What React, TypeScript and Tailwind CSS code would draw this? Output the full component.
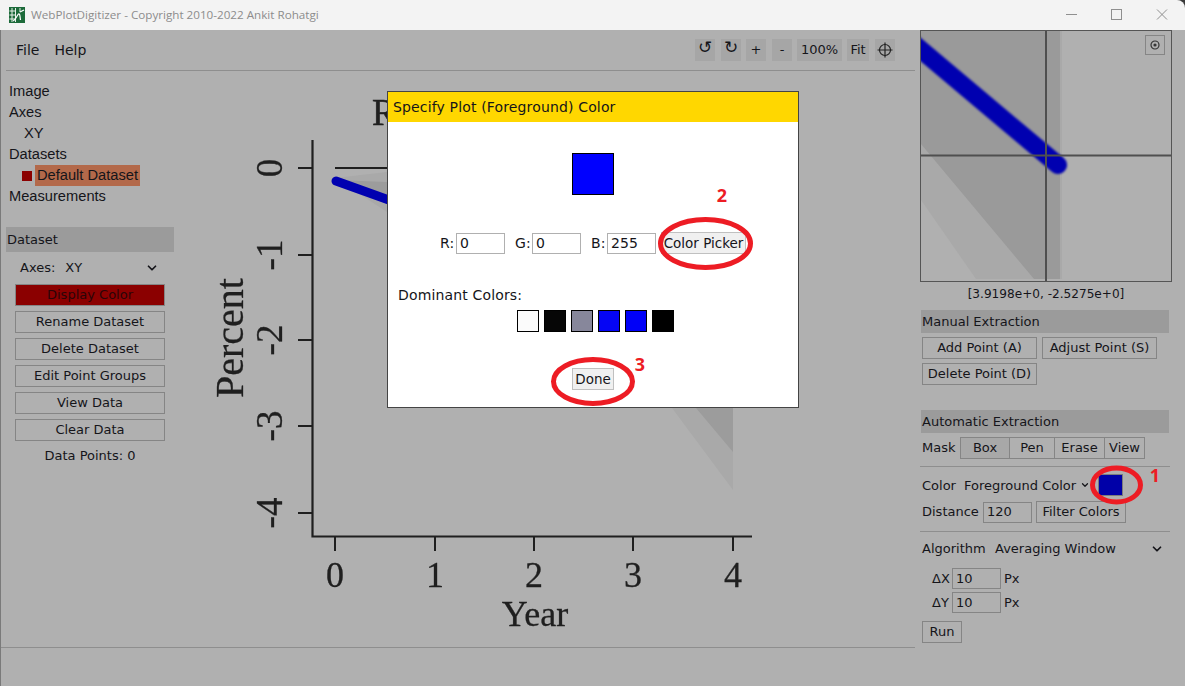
import { ChevronDown } from 'lucide-react';

const ui = "font-['DejaVu_Sans',sans-serif] text-[13px]";

const DATASET_ACTIONS = ['Rename Dataset', 'Delete Dataset', 'Edit Point Groups', 'View Data', 'Clear Data'];
const DOMINANT = ['bg-[#fbfbfb]', 'bg-[#060606]', 'bg-[#87879b]', 'bg-[#0505f5]', 'bg-[#0000f8]', 'bg-black'];

const Btn = ({ label, className = '' }: { label: string; className?: string }) => (
  <div className={`flex h-[22px] items-center justify-center border border-[#858585] text-[#15151a] ${className}`}>{label}</div>
);

const SectionHead = ({ label }: { label: string }) => (
  <div className="flex h-[23px] items-center bg-[#9b9b9b] pl-[1px] text-[#15151a]">{label}</div>
);

const Field = ({ value, className = '' }: { value: string; className?: string }) => (
  <div className={`flex h-[21px] w-[49px] items-center border border-[#858585] pl-[3px] ${className}`}>{value}</div>
);

const ToolBtn = ({ label, className = '' }: { label: React.ReactNode; className?: string }) => (
  <div className={`flex h-[22px] items-center justify-center bg-[#a6a6a6] text-[#15151a] ${className}`}>{label}</div>
);

function AppIcon() {
  return (
    <svg width="16" height="16" viewBox="0 0 16 16" className="shrink-0">
      <rect width="16" height="16" fill="#1c6a3a" />
      <path d="M0.5 4H7M0.5 8H7M0.5 12H7M3 1V15M6.5 1V15M11 1V5" stroke="#e8f0e8" strokeWidth="1" fill="none" />
      <path d="M4 14C7 13 8 8 9.5 7C11 6 11 10 11.5 13M11 5L15 3" stroke="#fff" strokeWidth="1.2" fill="none" />
    </svg>
  );
}

function TitleBar() {
  return (
    <div className="flex h-[30px] shrink-0 items-center rounded-tr-[8px] bg-[#f3f3f3] pl-[9px]">
      <AppIcon />
      <span className="ml-[6px] font-['Open_Sans',sans-serif] text-[11.67px] text-[#8c8c8c]">
        WebPlotDigitizer - Copyright 2010-2022 Ankit Rohatgi
      </span>
      <svg width="119" height="30" viewBox="0 0 119 30" fill="none" stroke="#8f8f8f" strokeWidth="1" className="ml-auto">
        <path d="M0 14.5H11" />
        <rect x="45.5" y="9.5" width="10" height="10" />
        <path d="M91 9.5L101 19.5M101 9.5L91 19.5" />
      </svg>
    </div>
  );
}

function MenuBar() {
  return (
    <div className={`ml-[5px] flex h-[41px] shrink-0 items-center justify-between border-b border-[#8e8e8e] pl-[10px] pr-[20px] ${ui}`}>
      <div className="flex gap-[15px] text-[14px] text-[#15151a]">
        <span>File</span>
        <span>Help</span>
      </div>
      <div className="flex gap-[5px]">
        <ToolBtn label="↺" className="w-[20px] pb-[4px] text-[17px]" />
        <ToolBtn label="↻" className="ml-[1px] w-[20px] pb-[4px] text-[17px]" />
        <ToolBtn label="+" className="w-[20px]" />
        <ToolBtn label="-" className="ml-[1px] w-[20px]" />
        <ToolBtn label="100%" className="w-[45px]" />
        <ToolBtn label="Fit" className="w-[22px]" />
        <ToolBtn
          className="ml-[1px] w-[20px]"
          label={
            <svg width="16" height="16" viewBox="0 0 16 16" fill="none" stroke="#222" strokeWidth="1.2">
              <circle cx="8" cy="8" r="5.5" />
              <path d="M8 0.5V15.5M0.5 8H15.5" />
            </svg>
          }
        />
      </div>
    </div>
  );
}

function LeftPanel() {
  return (
    <div className={`flex w-[179px] shrink-0 flex-col pl-[5px] ${ui}`}>
      <div className="flex flex-col pl-[3px] pt-[10px] font-['Liberation_Sans',sans-serif] text-[14.67px] leading-[21px] text-[#15151a]">
        <span>Image</span>
        <span>Axes</span>
        <span className="pl-[15px]">XY</span>
        <span>Datasets</span>
        <span className="flex items-center pl-[13px]">
          <span className="mr-[3px] h-[10px] w-[10px] bg-[#8b0000]" />
          <span className="bg-[#b3694a] px-[2px]">Default Dataset</span>
        </span>
        <span>Measurements</span>
      </div>
      <div className="mt-[20px] w-[168px]">
        <div className="flex h-[25px] items-center bg-[#9b9b9b] pl-[1px] text-[#15151a]">Dataset</div>
        <div className="flex h-[31px] items-center pl-[14px] pr-[15px] text-[#15151a]">
          <span>Axes:</span>
          <span className="ml-[10px]">XY</span>
          <ChevronDown size={14} strokeWidth={3} className="ml-auto text-[#15151a]" />
        </div>
        <div className="ml-[9px] mt-[1px] flex w-[150px] flex-col gap-[5px]">
          <Btn label="Display Color" className="bg-[#8b0000] !text-[#2a0508]" />
          {DATASET_ACTIONS.map(a => (
            <Btn key={a} label={a} />
          ))}
        </div>
        <div className="mt-[5px] text-center text-[#15151a]">Data Points: 0</div>
      </div>
    </div>
  );
}

// the digitized plot image in the middle of the page
function PlotImage() {
  const ink = '#1f1f1f';
  const xs = [335, 435, 534, 633, 733];
  const ys = [168, 255, 340, 426, 513];
  const yLabels = ['0', '-1', '-2', '-3', '-4'];
  const serif = 'Liberation Serif, serif';
  return (
    <svg viewBox="180 71 735 576" className="h-[576px] min-w-0 flex-1 blur-[0.5px]">
      <polygon points="335,178 387,172 733,300 733,490 672,408 387,212" fill="#a9a9a9" />
      <polygon points="335,180 387,182 733,300 733,452 696,408 387,204" fill="#9c9c9c" />
      <line x1="335" y1="168" x2="400" y2="168" stroke={ink} strokeWidth="2" />
      <line x1="336" y1="181" x2="400" y2="204" stroke="#0000b0" strokeWidth="9" strokeLinecap="round" />
      <path d="M312.5 140V536.5H752" fill="none" stroke={ink} strokeWidth="2.2" />
      {ys.map((y, i) => (
        <g key={y}>
          <line x1="298" y1={y} x2="312" y2={y} stroke={ink} strokeWidth="2" />
          <text
            transform={`translate(282 ${y}) rotate(-90)`}
            textAnchor="middle"
            fontFamily={serif}
            fontSize="37"
            fill={ink}
            stroke={ink}
            strokeWidth="0.3"
          >
            {yLabels[i]}
          </text>
        </g>
      ))}
      {xs.map((x, i) => (
        <g key={x}>
          <line x1={x} y1="536" x2={x} y2="551" stroke={ink} strokeWidth="2" />
          <text x={x} y="587" textAnchor="middle" fontFamily={serif} fontSize="36" fill={ink} stroke={ink} strokeWidth="0.3">
            {i}
          </text>
        </g>
      ))}
      <text x="535" y="626" textAnchor="middle" fontFamily={serif} fontSize="36" fill={ink} stroke={ink} strokeWidth="0.3">
        Year
      </text>
      <text
        transform="translate(243 338) rotate(-90)"
        textAnchor="middle"
        fontFamily={serif}
        fontSize="40"
        fill={ink}
        stroke={ink}
        strokeWidth="0.3"
      >
        Percent
      </text>
      <text x="372" y="125" fontFamily={serif} fontSize="37" fill={ink} stroke={ink} strokeWidth="0.5">
        R
      </text>
    </svg>
  );
}

function ZoomPreview() {
  return (
    <div className="relative h-[252px] w-[252px] overflow-hidden border border-[#555]">
      <svg viewBox="921 31 250 250" className="h-full w-full">
        <polygon points="921,200 976,279 1062,279 1062,31 921,31" fill="#a9a9a9" />
        <polygon points="921,144 1034,279 1060,279 1060,31 921,31" fill="#9a9a9a" />
        <line x1="914" y1="44" x2="1058" y2="165" stroke="#0000b0" strokeWidth="18" strokeLinecap="round" className="blur-[1px]" />
        <line x1="1046" y1="31" x2="1046" y2="281" stroke="#4f4f4f" strokeWidth="2" />
        <line x1="921" y1="155.5" x2="1171" y2="155.5" stroke="#4f4f4f" strokeWidth="2" />
      </svg>
      <div className="absolute right-[6px] top-[4px] flex h-[20px] w-[20px] items-center justify-center border border-[#858585]">
        <svg width="12" height="12" viewBox="0 0 12 12" fill="none" stroke="#333" strokeWidth="1.2">
          <circle cx="6" cy="6" r="4" />
          <circle cx="6" cy="6" r="1" fill="#333" />
        </svg>
      </div>
    </div>
  );
}

function RightPanel() {
  return (
    <div className={`flex w-[270px] shrink-0 flex-col pl-[5px] text-[#15151a] ${ui}`}>
      <ZoomPreview />
      <div className="mt-[2px] h-[20px] w-[252px] text-center text-[12.1px] leading-[20px]">[3.9198e+0, -2.5275e+0]</div>
      <div className="ml-[1px] mt-[6px] w-[248px]">
        <SectionHead label="Manual Extraction" />
        <div className="mt-[4px] flex flex-wrap gap-x-[5px] gap-y-[4px] pl-[1px]">
          <Btn label="Add Point (A)" className="w-[115px]" />
          <Btn label="Adjust Point (S)" className="w-[115px]" />
          <Btn label="Delete Point (D)" className="w-[115px]" />
        </div>
        <div className="mt-[25px]">
          <SectionHead label="Automatic Extraction" />
        </div>
        <div className="mt-[4px] flex items-center pl-[1px]">
          <span className="w-[38px]">Mask</span>
          <Btn label="Box" className="w-[50px] bg-[#a8a8a8]" />
          <Btn label="Pen" className="w-[45px] border-l-0" />
          <Btn label="Erase" className="w-[50px] border-l-0" />
          <Btn label="View" className="w-[40px] border-l-0" />
        </div>
      </div>
      <div className="mt-[7px] w-[250px] border-t border-[#8e8e8e] pl-[2px] pt-[7px]">
        <div className="flex h-[22px] items-center">
          <span className="w-[42px] pt-[2px]">Color</span>
          <span className="pt-[2px]">Foreground Color</span>
          <ChevronDown size={10} strokeWidth={3} className="ml-[4px]" />
          <div className="ml-[8px] h-[22px] w-[25px] border border-[#7c7c7c] bg-[#0000a8]" />
        </div>
        <div className="mt-[5px] flex items-center">
          <span className="w-[61px]">Distance</span>
          <Field value="120" />
          <Btn label="Filter Colors" className="ml-[4px] w-[90px]" />
        </div>
      </div>
      <div className="mt-[8px] w-[250px] border-t border-[#8e8e8e] pl-[2px] pt-[7px]">
        <div className="flex h-[20px] items-center pr-[6px]">
          <span className="w-[73px]">Algorithm</span>
          <span>Averaging Window</span>
          <ChevronDown size={14} strokeWidth={3} className="ml-auto" />
        </div>
        <div className="mt-[9px] flex items-center pl-[10px]">
          <span className="w-[20px]">ΔX</span>
          <Field value="10" />
          <span className="ml-[3px]">Px</span>
        </div>
        <div className="mt-[3px] flex items-center pl-[10px]">
          <span className="w-[20px]">ΔY</span>
          <Field value="10" />
          <span className="ml-[3px]">Px</span>
        </div>
        <Btn label="Run" className="mt-[8px] w-[40px]" />
      </div>
    </div>
  );
}

function ColorDialog() {
  return (
    <div className="absolute left-[387px] top-[91px] flex h-[317px] w-[412px] flex-col border border-[#444] bg-white font-['DejaVu_Sans',sans-serif] text-[14px] tracking-[0.15px] text-[#15151a]">
      <div className="flex h-[30px] shrink-0 items-center bg-[#ffd700] pl-[5px]">Specify Plot (Foreground) Color</div>
      <div className="mt-[31px] flex justify-center">
        <div className="h-[42px] w-[42px] border border-black bg-[#0000ff]" />
      </div>
      <div className="mt-[37px] flex items-center justify-center">
        <span className="w-[16px]">R:</span>
        <Field value="0" className="border-[#b0b0b0]" />
        <span className="ml-[10px] w-[17px]">G:</span>
        <Field value="0" className="border-[#b0b0b0]" />
        <span className="ml-[10px] w-[16px]">B:</span>
        <Field value="255" className="border-[#b0b0b0]" />
        <Btn label="Color Picker" className="ml-[5px] w-[85px] border-[#c0c0c0] bg-[#f0f0f0] text-[13.5px] tracking-normal" />
      </div>
      <div className="mt-[33px] pl-[10px] leading-[17px]">Dominant Colors:</div>
      <div className="mt-[6px] flex justify-center gap-[5px] pl-[5px]">
        {DOMINANT.map((c, i) => (
          <div key={i} className={`h-[22px] w-[22px] border border-black ${c}`} />
        ))}
      </div>
      <div className="mt-[36px] flex justify-center">
        <Btn label="Done" className="w-[42px] border-[#c0c0c0] bg-[#f0f0f0] text-[13.5px] tracking-normal" />
      </div>
    </div>
  );
}

// red marks the screenshot's author painted on top
function Annotations() {
  const red = '#ed1c24';
  const num = { fontFamily: 'Open Sans, sans-serif', fontSize: 18, fontWeight: 700, fill: red, textAnchor: 'middle' as const };
  return (
    <svg viewBox="0 0 1185 686" className="pointer-events-none absolute inset-0 h-[686px] w-[1185px]">
      <g fill="none" stroke={red} strokeWidth="5">
        <ellipse cx="1116.5" cy="485" rx="24" ry="17" />
        <ellipse cx="705.5" cy="243.5" rx="45" ry="24" />
        <ellipse cx="593" cy="381.5" rx="39.5" ry="22" />
      </g>
      <text x="1155" y="482" {...num}>1</text>
      <text x="722" y="202" {...num}>2</text>
      <text x="640" y="371" {...num}>3</text>
    </svg>
  );
}

export default function App() {
  return (
    <div className="relative flex h-[686px] w-[1185px] flex-col overflow-hidden bg-[#3a3a3a]">
      <TitleBar />
      <div className="flex min-h-0 flex-1 border-l border-[#7a7a7a] bg-[#b0b0b0]">
        <div className="flex w-[914px] shrink-0 flex-col">
          <MenuBar />
          <div className="flex h-[577px] shrink-0 border-b border-[#8e8e8e]">
            <LeftPanel />
            <PlotImage />
          </div>
        </div>
        <RightPanel />
      </div>
      <ColorDialog />
      <Annotations />
    </div>
  );
}
